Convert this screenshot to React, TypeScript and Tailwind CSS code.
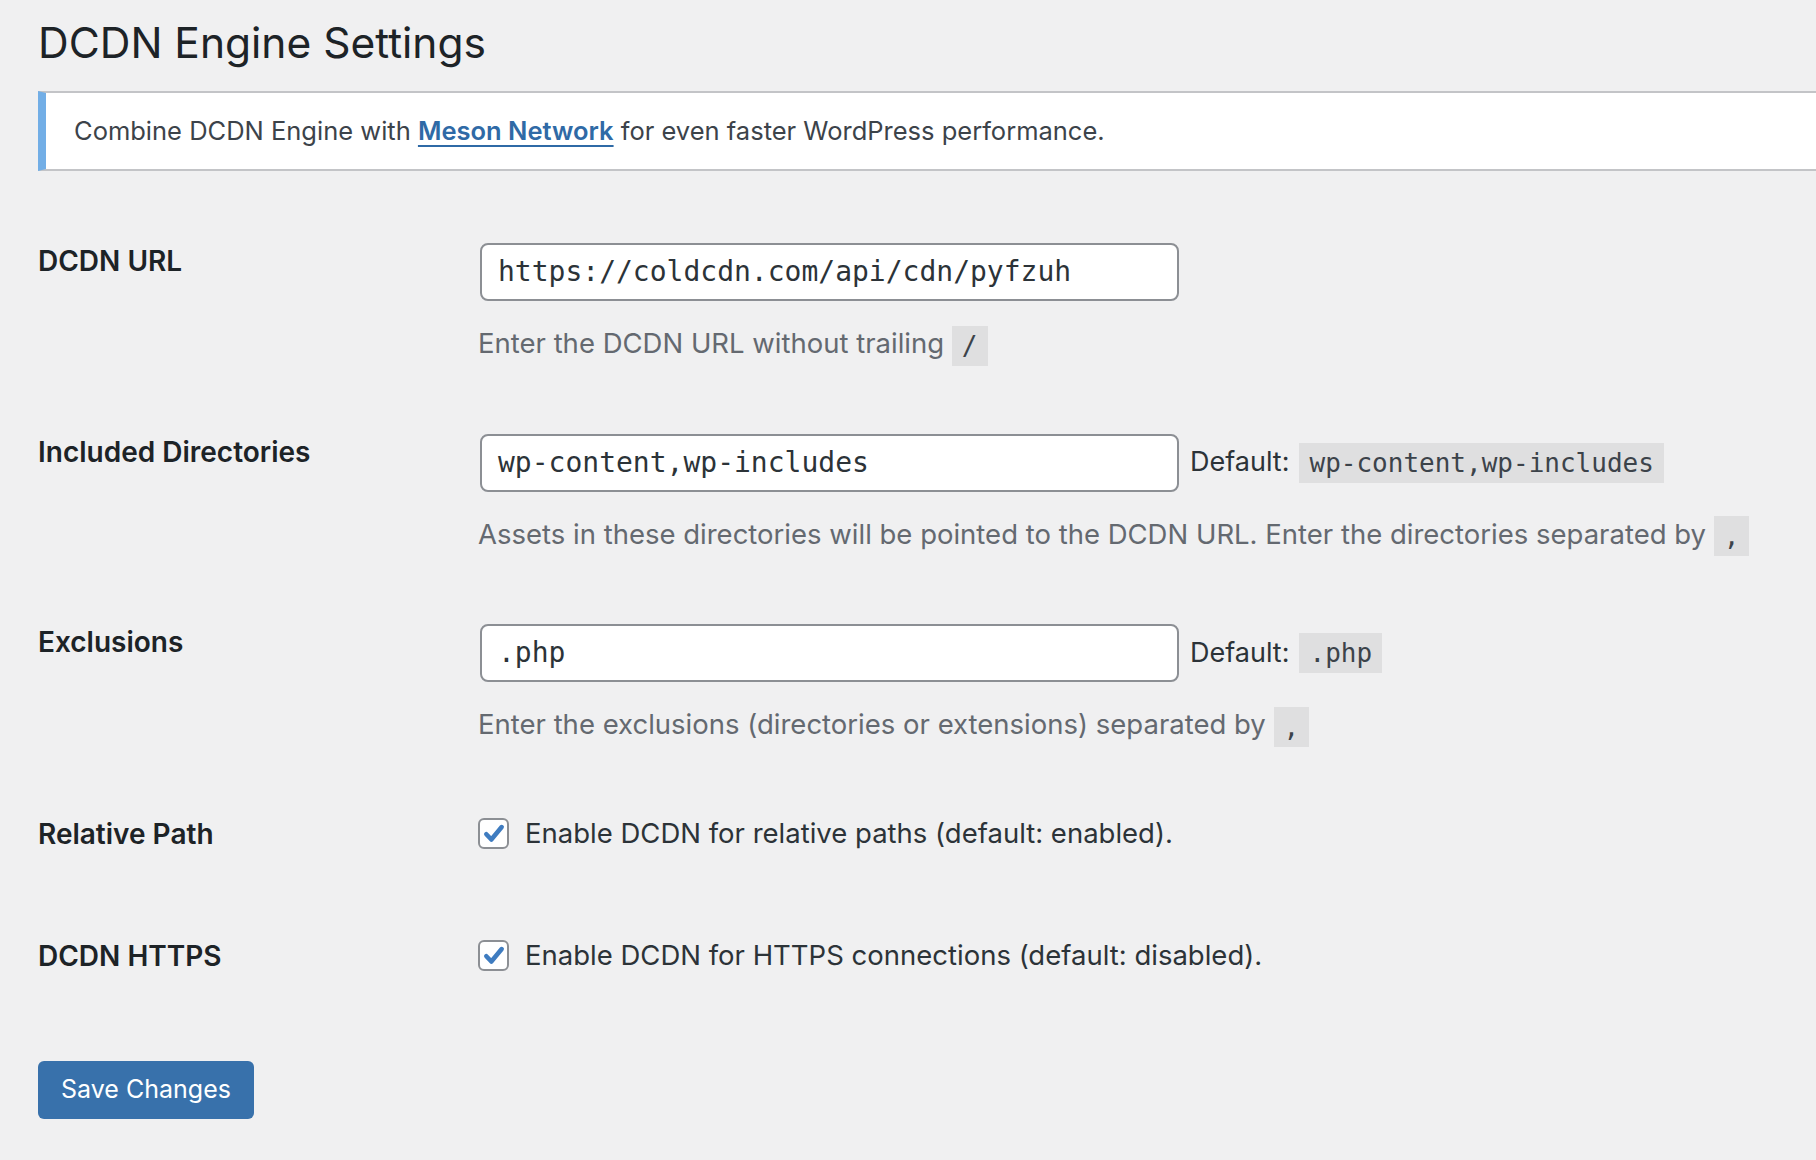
import React from "react"

const sans = { fontFamily: "Inter, 'Liberation Sans', sans-serif" }
const mono = { fontFamily: "'DejaVu Sans Mono', 'Liberation Mono', monospace" }

function Code({ children }: { children: React.ReactNode }) {
  return (
    <code
      className="inline-block h-[40px] px-[10px] bg-[#dfdfe0] text-[26px] leading-[40px] text-[#3c434a] align-middle"
      style={mono}
    >
      {children}
    </code>
  )
}

function TextInput({ value }: { value: string }) {
  return (
    <div
      className="w-[699px] h-[58px] shrink-0 flex items-center px-[16px] bg-white border-2 border-[#8c8f94] rounded-[8px] text-[28px] text-[#2c3338]"
      style={mono}
    >
      {value}
    </div>
  )
}

function Check() {
  return (
    <div className="w-[31px] h-[31px] shrink-0 flex items-center justify-center bg-white border-2 border-[#8c8f94] rounded-[6px]">
      <svg width="24" height="24" viewBox="0 0 20 20">
        <path
          d="M3.6 10.2 L7.8 14.6 L16.4 4.2"
          fill="none"
          stroke="#3f7cc0"
          strokeWidth="3.8"
          strokeLinecap="round"
          strokeLinejoin="round"
        />
      </svg>
    </div>
  )
}

function Label({ children }: { children: React.ReactNode }) {
  return (
    <div className="w-[442px] shrink-0 text-[28px] leading-[36px] font-semibold text-[#1d2327]">
      {children}
    </div>
  )
}

export default function App() {
  return (
    <div className="min-h-[1160px] w-full bg-[#f0f0f1] overflow-hidden" style={sans}>
      <div className="pl-[38px] pt-[17px]">
        <h1 className="text-[42.5px] leading-[52px] font-normal text-[#1d2327]">DCDN Engine Settings</h1>

        {/* notice */}
        <div className="mt-[22px] h-[80px] flex items-center bg-white border-y-2 border-[#c3c4c7] border-l-[8px] border-l-[#72aee6] pl-[28px]">
          <p className="text-[25.5px] text-[#3c434a]">
            Combine DCDN Engine with{" "}
            <a href="#" className="text-[#2f6aa6] font-semibold underline underline-offset-[5px] decoration-2">
              Meson Network
            </a>{" "}
            for even faster WordPress performance.
          </p>
        </div>

        {/* form table */}
        <div className="mt-[72px]">
          <div className="flex">
            <Label>DCDN URL</Label>
            <div>
              <TextInput value="https://coldcdn.com/api/cdn/pyfzuh" />
              <p className="mt-[22px] -ml-[2px] text-[27.5px] leading-[40px] text-[#646970]">
                Enter the DCDN URL without trailing <Code>/</Code>
              </p>
            </div>
          </div>

          <div className="flex mt-[68px]">
            <Label>Included Directories</Label>
            <div>
              <div className="flex items-center">
                <TextInput value="wp-content,wp-includes" />
                <span className="ml-[11px] mr-[10px] text-[27px] text-[#2c3338]">Default:</span>
                <Code>wp-content,wp-includes</Code>
              </div>
              <p className="mt-[22px] -ml-[2px] text-[27.5px] leading-[40px] text-[#646970]">
                Assets in these directories will be pointed to the DCDN URL. Enter the directories separated by <Code>,</Code>
              </p>
            </div>
          </div>

          <div className="flex mt-[68px]">
            <Label>Exclusions</Label>
            <div>
              <div className="flex items-center">
                <TextInput value=".php" />
                <span className="ml-[11px] mr-[10px] text-[27px] text-[#2c3338]">Default:</span>
                <Code>.php</Code>
              </div>
              <p className="mt-[22px] -ml-[2px] text-[27.5px] leading-[40px] text-[#646970]">
                Enter the exclusions (directories or extensions) separated by <Code>,</Code>
              </p>
            </div>
          </div>

          <div className="flex items-center mt-[67px] h-[40px]">
            <Label>Relative Path</Label>
            <div className="-ml-[2px] flex items-center gap-[16px]">
              <Check />
              <span className="text-[27.5px] text-[#2c3338]">Enable DCDN for relative paths (default: enabled).</span>
            </div>
          </div>

          <div className="flex items-center mt-[82px] h-[40px]">
            <Label>DCDN HTTPS</Label>
            <div className="-ml-[2px] flex items-center gap-[16px]">
              <Check />
              <span className="text-[27.5px] text-[#2c3338]">Enable DCDN for HTTPS connections (default: disabled).</span>
            </div>
          </div>
        </div>

        <button className="mt-[85px] h-[58px] w-[216px] rounded-[6px] bg-[#3871ab] text-white text-[25px]">
          Save Changes
        </button>
      </div>
    </div>
  )
}
